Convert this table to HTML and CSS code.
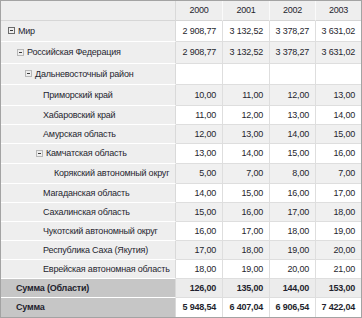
FILE: index.html
```html
<!DOCTYPE html>
<html>
<head>
<meta charset="utf-8">
<link rel="stylesheet" href="styles.css">
</head>
<body>
<div class="grid">
  <div class="row head h20">
    <div class="c rh corner"></div>
    <div class="c ch">2000</div>
    <div class="c ch">2001</div>
    <div class="c ch">2002</div>
    <div class="c ch last">2003</div>
  </div>

  <div class="row h21 odd">
    <div class="c rh l0"><span class="tg box"></span>Мир</div>
    <div class="c v">2 908,77</div><div class="c v">3 132,52</div><div class="c v">3 378,27</div><div class="c v last">3 631,02</div>
  </div>
  <div class="row h22 even">
    <div class="c rh l1"><span class="tg open"></span>Российская Федерация</div>
    <div class="c v">2 908,77</div><div class="c v">3 132,52</div><div class="c v">3 378,27</div><div class="c v last">3 631,02</div>
  </div>
  <div class="row h21 odd">
    <div class="c rh l2"><span class="tg open"></span>Дальневосточный район</div>
    <div class="c v"></div><div class="c v"></div><div class="c v"></div><div class="c v last"></div>
  </div>
  <div class="row h21 even">
    <div class="c rh leaf3">Приморский край</div>
    <div class="c v">10,00</div><div class="c v">11,00</div><div class="c v">12,00</div><div class="c v last">13,00</div>
  </div>
  <div class="row h19 odd">
    <div class="c rh leaf3">Хабаровский край</div>
    <div class="c v">11,00</div><div class="c v">12,00</div><div class="c v">13,00</div><div class="c v last">14,00</div>
  </div>
  <div class="row h19 even">
    <div class="c rh leaf3">Амурская область</div>
    <div class="c v">12,00</div><div class="c v">13,00</div><div class="c v">14,00</div><div class="c v last">15,00</div>
  </div>
  <div class="row h20 odd">
    <div class="c rh l3"><span class="tg open"></span>Камчатская область</div>
    <div class="c v">13,00</div><div class="c v">14,00</div><div class="c v">15,00</div><div class="c v last">16,00</div>
  </div>
  <div class="row h20 even">
    <div class="c rh leaf4">Корякский автономный округ</div>
    <div class="c v">5,00</div><div class="c v">7,00</div><div class="c v">8,00</div><div class="c v last">7,00</div>
  </div>
  <div class="row h19 odd">
    <div class="c rh leaf3">Магаданская область</div>
    <div class="c v">14,00</div><div class="c v">15,00</div><div class="c v">16,00</div><div class="c v last">17,00</div>
  </div>
  <div class="row h19 even">
    <div class="c rh leaf3">Сахалинская область</div>
    <div class="c v">15,00</div><div class="c v">16,00</div><div class="c v">17,00</div><div class="c v last">18,00</div>
  </div>
  <div class="row h19 odd">
    <div class="c rh leaf3">Чукотский автономный округ</div>
    <div class="c v">16,00</div><div class="c v">17,00</div><div class="c v">18,00</div><div class="c v last">19,00</div>
  </div>
  <div class="row h19 even">
    <div class="c rh leaf3">Республика Саха (Якутия)</div>
    <div class="c v">17,00</div><div class="c v">18,00</div><div class="c v">19,00</div><div class="c v last">20,00</div>
  </div>
  <div class="row h19 odd">
    <div class="c rh leaf3">Еврейская автономная область</div>
    <div class="c v">18,00</div><div class="c v">19,00</div><div class="c v">20,00</div><div class="c v last">21,00</div>
  </div>
  <div class="row h19 even total">
    <div class="c rh sum">Сумма (Области)</div>
    <div class="c v">126,00</div><div class="c v">135,00</div><div class="c v">144,00</div><div class="c v last">153,00</div>
  </div>
  <div class="row h19 odd total bottom">
    <div class="c rh sum">Сумма</div>
    <div class="c v">5 948,54</div><div class="c v">6 407,04</div><div class="c v">6 906,54</div><div class="c v last">7 422,04</div>
  </div>
</div>
</body>
</html>
```

FILE: styles.css
```css
html, body {
  margin: 0;
  padding: 0;
  background: #ffffff;
}

.grid {
  width: 362px;
  height: 318px;
  box-sizing: border-box;
  border: 1px solid #a3a3a3;
  display: flex;
  flex-direction: column;
  font-family: "Liberation Sans", Arial, sans-serif;
  font-size: 9px;
  letter-spacing: -0.2px;
  color: #1f1f2e;
  overflow: hidden;
}

.row {
  display: grid;
  grid-template-columns: 175px 47px 47px 46px 45px;
  flex: none;
}

.h19 { height: 19px; }
.h20 { height: 20px; }
.h21 { height: 21px; }
.h22 { height: 22px; }

.c {
  box-sizing: border-box;
  border-right: 1px solid #dedede;
  border-bottom: 1px solid #dedede;
  display: flex;
  align-items: center;
  white-space: nowrap;
  overflow: visible;
  padding-bottom: 1px;
}

.c.last { border-right: none; }

.rh {
  background: #eeeeee;
  border-bottom-color: #ffffff;
  border-right-color: #d9d9d9;
}

.head .c {
  background: #eeeeee;
  border-bottom-color: #d6d6d6;
}

.head .ch {
  justify-content: center;
  border-right-color: #fafafa;
}

.head .corner {
  border-right-color: #d9d9d9;
}

.v {
  justify-content: flex-end;
  padding-right: 6px;
}

.even .v { background: #f0f0f0; }
.odd .v { background: #ffffff; }

.l0 { padding-left: 7px; }
.l1 { padding-left: 16px; }
.l2 { padding-left: 24px; }
.l3 { padding-left: 35px; }
.leaf3 { padding-left: 42px; }
.leaf4 { padding-left: 53px; }

.tg {
  position: relative;
  width: 7px;
  height: 7px;
  box-sizing: border-box;
  margin-right: 3px;
  flex: none;
}

.tg::after {
  content: "";
  position: absolute;
  left: 1px;
  right: 1px;
  top: 2px;
  height: 1px;
  background: #3a3a3a;
}

.tg.box {
  border: 1px solid #6a6a6a;
}

.tg.open {
  border: 1px solid #b8b8b8;
}

.total .rh {
  background: #c6c6c6;
}

.total .c { font-weight: bold; }

.total.even .v {
  background: #ececec;
  border-bottom-color: #dedede;
}

.total.even .rh {
  border-bottom-color: #ffffff;
}

.sum { padding-left: 15px; }

.bottom .c { border-bottom: none; }
```
